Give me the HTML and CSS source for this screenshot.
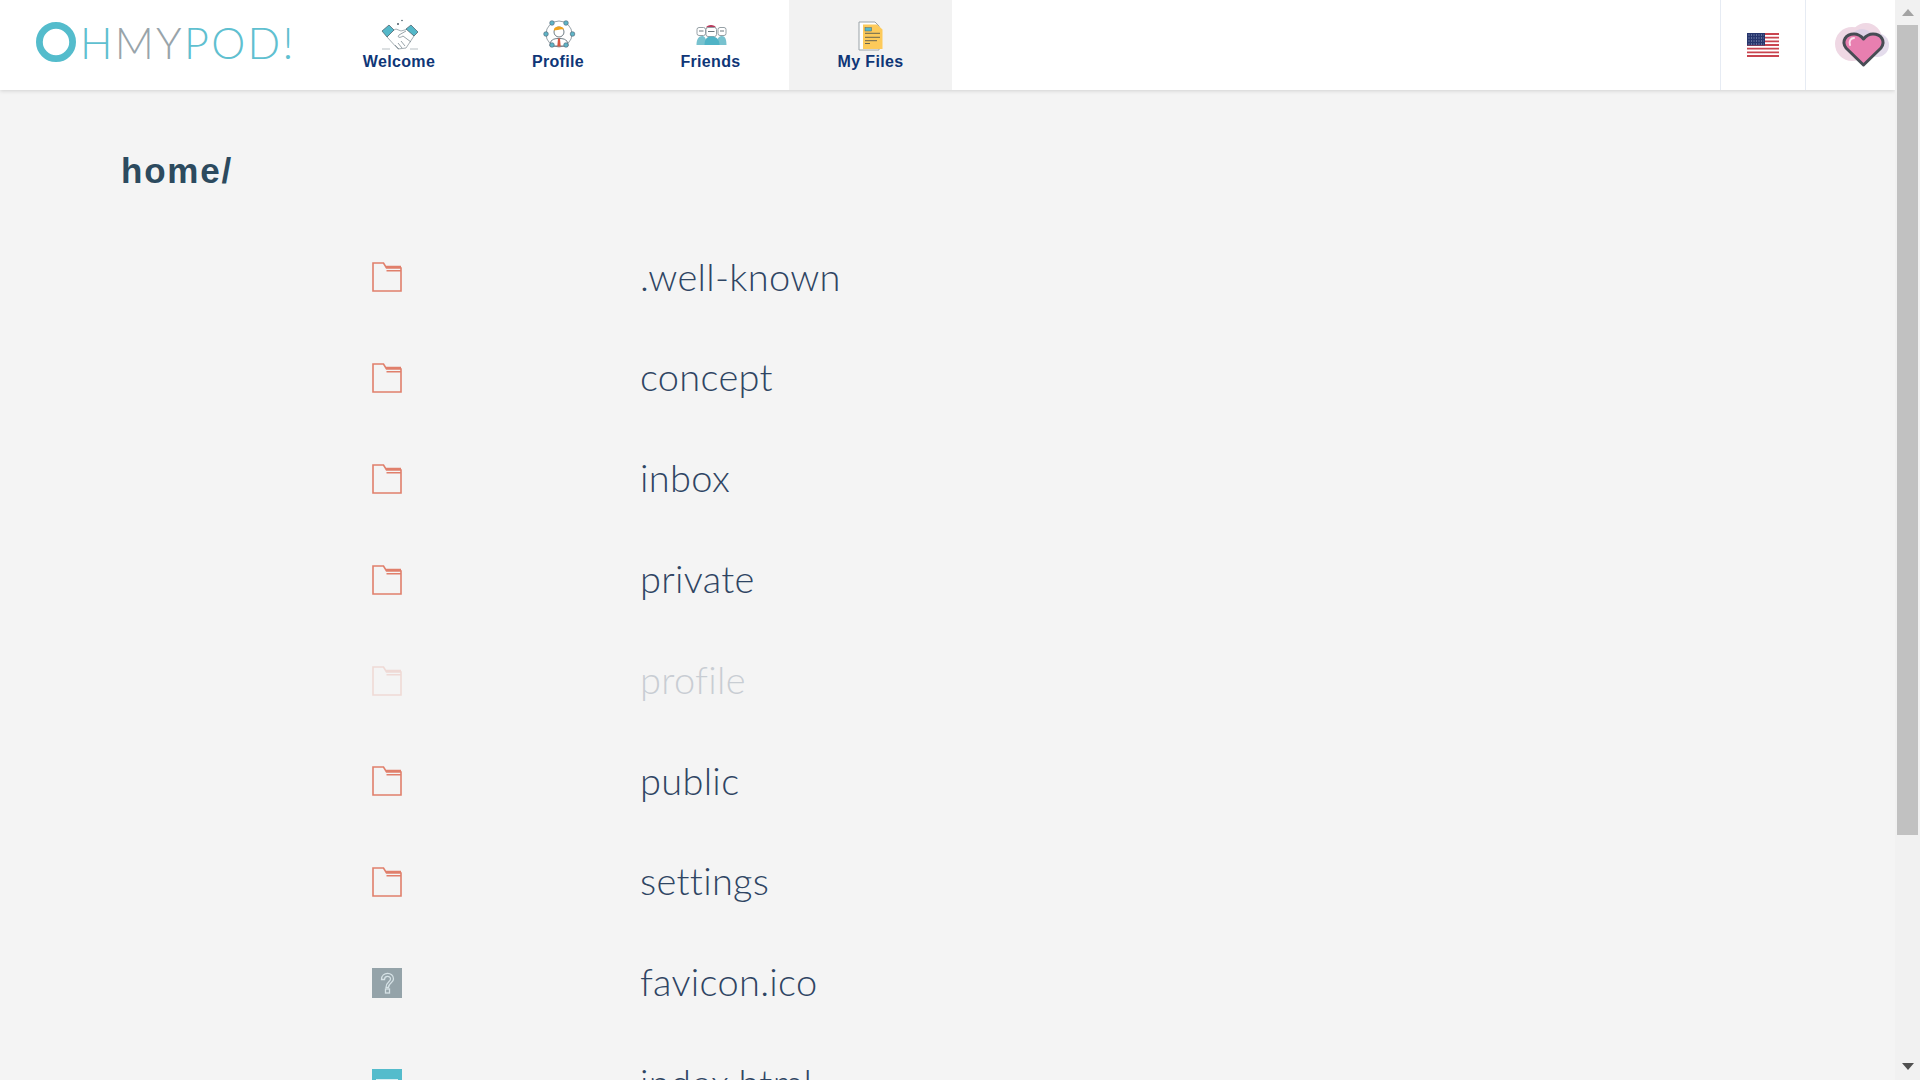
FILE: index.html
```html
<!DOCTYPE html>
<html lang="en">
<head>
<meta charset="utf-8">
<title>OhMyPod!</title>
<link rel="stylesheet" href="styles.css">
</head>
<body>
<svg class="defs" width="0" height="0" aria-hidden="true">
  <symbol id="folder" viewBox="0 0 30 30">
    <path d="M1 1H11.500L14.500 6H29V29H1Z M13 4.500H29 M14.500 8.700H29" fill="none" stroke="#e07f6b" stroke-width="1.600"/>
  </symbol>
</svg>
<div class="app">
  <div class="page">
    <header class="topbar">
      <a class="logo">
        <svg class="logo-o" viewBox="0 0 40 40"><circle cx="20" cy="20" r="16.600" fill="none" stroke="#54bccc" stroke-width="6.800"/></svg>
        <span class="logo-text"><span class="lt-a">H</span><span class="lt-b">MY</span><span class="lt-a">POD!</span></span>
      </a>
      <nav class="nav">
        <a class="tab tab-welcome">
          <svg class="tab-icon" viewBox="0 0 40 34">
            <path d="M3 31H11M31 31H39" stroke="#9aa5aa" stroke-width=".7"/>
            <circle cx="19" cy="6" r="1" fill="#4a5a64"/><circle cx="23" cy="2.500" r=".8" fill="#4a5a64"/>
            <path d="M8 19L19 31L27 30L35 18L29 11L22 13L17 11L13 13Z" fill="#fff" stroke="#7e8b92" stroke-width=".7"/>
            <path d="M20 17L27 13M20 17C18 20 21 20 24 18L32 24M16 27L20 31M19 25L23 30M22 23L26 28" stroke="#7e8b92" stroke-width=".8" fill="none"/>
            <path d="M3 13L10 7L15 12L8 19Z" fill="#54b8c9" stroke="#4a5a64" stroke-width=".7"/>
            <path d="M27 11L32 7L39 14L35 18Z" fill="#54b8c9" stroke="#4a5a64" stroke-width=".7"/>
          </svg>
          <span class="tab-label">Welcome</span>
        </a>
        <a class="tab tab-profile">
          <svg class="tab-icon" viewBox="0 0 40 34">
            <circle cx="21" cy="16" r="13" fill="none" stroke="#6b7a82" stroke-width=".7"/>
            <path d="M12 28C12 22 15 20.500 21 20.500S30 22 30 28Z" fill="#fff" stroke="#4a5a64" stroke-width=".8"/>
            <circle cx="21" cy="14" r="5" fill="#fff" stroke="#4a5a64" stroke-width=".8"/>
            <path d="M16 12.500C15 8 25 7 26 11.500C23 10.500 19 12.500 16 12.500Z" fill="#efa31d"/>
            <path d="M20 20.500H22L22.700 28.500H19.300Z" fill="#d9553f"/>
            <g fill="#5fb4c6" stroke="#4a6070" stroke-width=".6">
              <circle cx="14" cy="5" r="2.300"/><circle cx="28" cy="5" r="2.300"/>
              <circle cx="8" cy="16" r="2.300"/><circle cx="34.500" cy="16" r="2.300"/>
              <circle cx="14" cy="27" r="2.300"/><circle cx="28" cy="27" r="2.300"/>
            </g>
          </svg>
          <span class="tab-label">Profile</span>
        </a>
        <a class="tab tab-friends">
          <svg class="tab-icon" viewBox="0 0 40 34">
            <path d="M15 9.500C16 6 24 6 25 9.500Z" fill="#b8395b"/>
            <g fill="#fff" stroke="#8a969c" stroke-width=".9">
              <rect x="6" y="9.500" width="8.500" height="8" rx="2"/><rect x="27" y="9.500" width="8" height="8" rx="2"/><rect x="15" y="9.500" width="10.500" height="9" rx="2"/>
            </g>
            <path d="M8 13H12.500M17 13.500H23.500M29 13H33" stroke="#6e7a80" stroke-width="1.200"/>
            <path d="M5.500 27C5.500 21 8 18 11 18S15 20 16 27Z M25 27C26 20 28 18 31 18S35.500 21 35.500 27Z" fill="#78c2cf"/>
            <path d="M13.500 27C13.500 21 16 18.500 20.500 18.500S28.500 21 28.500 27Z" fill="#4fb3c6"/>
          </svg>
          <span class="tab-label">Friends</span>
        </a>
        <a class="tab tab-files">
          <svg class="tab-icon" viewBox="0 0 40 34">
            <path d="M8 4H24L28 8V32H8Z" fill="#fff" stroke="#9aa3a8" stroke-width="1"/>
            <path d="M12 6.500H26L31.500 11.500V31H12Z" fill="#fdca5a"/>
            <rect x="14" y="9.700" width="6.500" height="3.300" fill="#54b8c9" stroke="#4a6070" stroke-width=".5"/>
            <path d="M14 15.300H29M14 19.300H29M14 22.700H26M14 25.500H19" stroke="#6a6650" stroke-width="1"/>
          </svg>
          <span class="tab-label">My Files</span>
        </a>
      </nav>
      <div class="actions">
        <a class="action action-flag">
          <svg class="flag" viewBox="0 0 32 24">
            <rect width="32" height="24" fill="#fff"/>
            <path d="M0 1H32M0 4.700H32M0 8.400H32M0 12H32M0 15.700H32M0 19.400H32M0 23H32" stroke="#c9444f" stroke-width="1.800"/>
            <rect width="18" height="12.500" fill="#27366d"/>
            <path d="M1.500 2H17M1.500 5H17M1.500 8H17M1.500 11H17" stroke="#9aa6c8" stroke-width="1" stroke-dasharray="1 1.500"/>
          </svg>
        </a>
        <a class="action action-heart">
          <svg class="heart" viewBox="0 0 56 48">
            <circle cx="18" cy="23" r="17" fill="#efd8e4"/>
            <circle cx="32" cy="18" r="16" fill="#efd8e4"/>
            <circle cx="43" cy="24" r="12" fill="#e4dcec"/>
            <circle cx="28" cy="20" r="12" fill="#ddd0e4"/>
            <path d="M29.500 44L12 27C7 20 12 13 20 13C24 13 27 15 29.500 18C32 15 35 13 39 13C47 13 52 20 47 27Z" fill="#e87fb0" stroke="#474c54" stroke-width="3" stroke-linejoin="round"/>
            <path d="M16 24C14.500 20 17 17 20 17" stroke="#fbe0ec" stroke-width="2" fill="none" stroke-linecap="round"/>
          </svg>
        </a>
      </div>
    </header>
    <main class="content">
      <h1 class="path-title">home/</h1>
      <ul class="files">
        <li class="file"><svg class="file-icon"><use href="#folder"/></svg><span class="file-name">.well-known</span></li>
        <li class="file"><svg class="file-icon"><use href="#folder"/></svg><span class="file-name">concept</span></li>
        <li class="file"><svg class="file-icon"><use href="#folder"/></svg><span class="file-name">inbox</span></li>
        <li class="file"><svg class="file-icon"><use href="#folder"/></svg><span class="file-name">private</span></li>
        <li class="file file-faded"><svg class="file-icon"><use href="#folder"/></svg><span class="file-name">profile</span></li>
        <li class="file"><svg class="file-icon"><use href="#folder"/></svg><span class="file-name">public</span></li>
        <li class="file"><svg class="file-icon"><use href="#folder"/></svg><span class="file-name">settings</span></li>
        <li class="file">
          <svg class="file-icon" viewBox="0 0 30 30">
            <rect width="30" height="30" fill="#94a3a9"/>
            <path d="M9.500 11.500C9.500 3.500 21.500 3.500 21.500 11C21.500 15 16.500 14.500 16.500 19.500H14C14 13.500 18.500 14 18.500 11C18.500 7.500 12.500 7.500 12.500 11.500Z" fill="none" stroke="#d6e2e6" stroke-width="1.300"/>
            <rect x="13.500" y="21" width="4" height="4" fill="none" stroke="#d6e2e6" stroke-width="1.300"/>
          </svg>
          <span class="file-name">favicon.ico</span>
        </li>
        <li class="file">
          <svg class="file-icon" viewBox="0 0 30 30">
            <rect width="30" height="30" fill="#54bccc"/>
            <rect x="4" y="10" width="22" height="4" fill="#d6eef2"/>
          </svg>
          <span class="file-name">index.html</span>
        </li>
      </ul>
    </main>
  </div>
  <aside class="scrollbar">
    <span class="sb-arrow sb-up"></span>
    <span class="sb-track"><span class="sb-thumb"></span></span>
    <span class="sb-arrow sb-down"></span>
  </aside>
</div>
</body>
</html>
```
FILE: styles.css
```css
* { box-sizing: border-box; }
html, body { margin: 0; height: 100%; overflow: hidden; }
body { background: #f4f4f4; font-family: "Lato", "Liberation Sans", sans-serif; }
.defs { position: absolute; }
.app { display: flex; height: 1080px; }
.page { flex: 1; min-width: 0; height: 1080px; overflow: hidden; }

.topbar { display: flex; align-items: stretch; height: 90px; background: #fff; box-shadow: 0 1px 4px rgba(0,0,0,.14); position: relative; }
.logo { display: flex; align-items: center; width: 324px; padding-left: 36px; flex: none; }
.logo-o { width: 40px; height: 40px; flex: none; margin-top: -6px; }
.logo-text { font-family: "Lato", sans-serif; font-weight: 300; font-size: 43px; line-height: 1; margin-left: 4px; margin-top: -6px; letter-spacing: 2.3px; white-space: nowrap; }
.lt-a { color: #5fc0d0; }
.lt-b { color: #98a4aa; }

.nav { display: flex; flex: 1; }
.tab { display: flex; flex-direction: column; align-items: center; padding-top: 18px; color: #0f3677; }
.tab-welcome { width: 150px; }
.tab-profile { width: 158px; padding-left: 10px; }
.tab-friends { width: 157px; }
.tab-files { width: 163px; background: #f2f2f2; }
.tab-icon { width: 40px; height: 34px; display: block; }
.tab-label { font-family: "Liberation Sans", Arial, sans-serif; font-weight: 700; font-size: 16px; line-height: 18px; margin-top: 1px; letter-spacing: .35px; }

.actions { display: flex; flex: none; }
.action { display: flex; align-items: center; justify-content: center; border-left: 1px solid #e6ebf3; }
.action-flag { width: 85px; }
.action-heart { width: 90px; }
.flag { width: 32px; height: 24px; }
.heart { width: 56px; height: 48px; margin-left: 22px; }

.content { padding: 59px 0 0 121px; }
.path-title { margin: 0; font-family: "Liberation Sans", Arial, sans-serif; font-weight: 700; font-size: 35px; line-height: 44px; letter-spacing: 1.8px; color: #2c4a5e; }
.files { list-style: none; margin: 34px 0 0; padding: 0 0 0 251px; }
.file { display: flex; align-items: center; height: 100.8px; }
.file-icon { width: 30px; height: 30px; flex: none; margin-right: 238px; }
.file-name { font-size: 38px; font-weight: 300; letter-spacing: .3px; color: #2f4563; line-height: 1.2; font-variant-ligatures: none; margin-top: -2px; }
.file-faded { opacity: .22; }

.scrollbar { width: 25px; flex: none; display: flex; flex-direction: column; align-items: center; background: #f1f1f1; }
.sb-arrow { width: 0; height: 0; flex: none; border-left: 6px solid transparent; border-right: 6px solid transparent; }
.sb-up { border-bottom: 7px solid #a3a3a3; margin: 9px 0 9px; }
.sb-down { border-top: 7px solid #505050; margin: 0 0 10px; }
.sb-track { flex: 1; width: 100%; padding: 0 2px; display: flex; flex-direction: column; }
.sb-thumb { display: block; height: 810px; background: #c1c1c1; }
```
